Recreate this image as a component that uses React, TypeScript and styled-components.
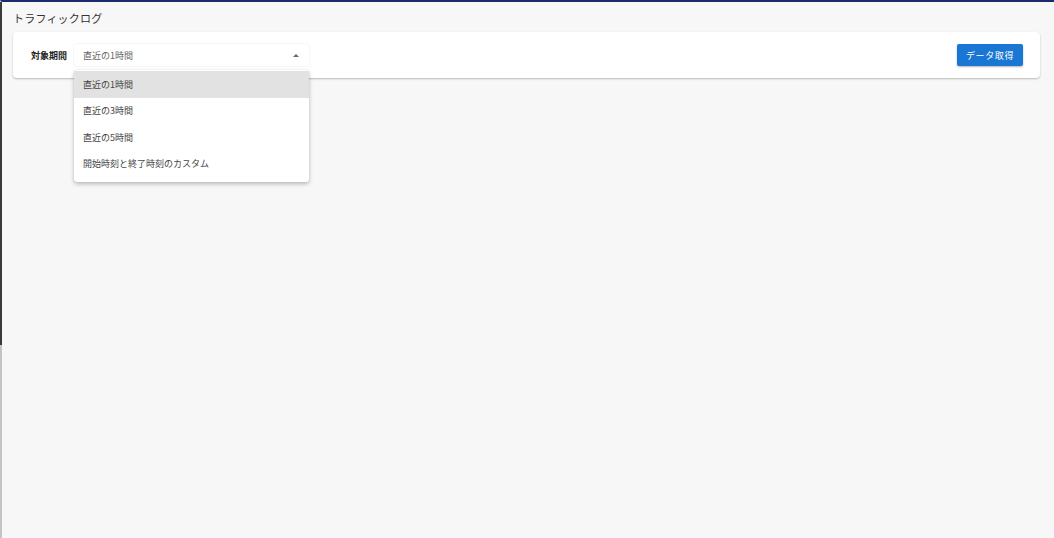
import React, { useState } from 'react'
import styled, { createGlobalStyle } from 'styled-components'

const GlobalStyle = createGlobalStyle`
    html, body {
        margin: 0;
        padding: 0;
        height: 100%;
    }
    body {
        background: #f7f7f7;
        font-family: "Noto Sans CJK JP", "Noto Sans", Roboto, sans-serif;
        color: #333;
    }
    #root {
        height: 100%;
    }
`

const Page = styled.div`
    box-sizing: border-box;
    height: 538px;
    width: 1054px;
    border-top: 2px solid #1b2a6b;
    border-left: 2px solid #c4c4c4;
    position: relative;
    padding: 7px 14px 0 11px;

    &::before {
        content: "";
        position: absolute;
        left: -2px;
        top: 0;
        width: 2px;
        height: 343px;
        background: #3a3a3a;
    }
`

const Title = styled.h1`
    margin: 0 0 5px 0;
    font-size: 11px;
    font-weight: 400;
    line-height: 18px;
    color: #333;
    letter-spacing: 0.2px;
`

const Card = styled.div`
    background: #fff;
    border-radius: 4px;
    box-shadow: 0 1px 2px rgba(0, 0, 0, 0.25);
    height: 46px;
    display: flex;
    align-items: center;
    padding: 0 17px 0 18px;
`

const Label = styled.span`
    font-size: 9px;
    font-weight: 700;
    color: #222;
    margin-right: 7px;
`

const SelectWrap = styled.div`
    position: relative;
    width: 235px;
`

const SelectBox = styled.div`
    box-sizing: border-box;
    height: 22px;
    display: flex;
    align-items: center;
    justify-content: space-between;
    padding: 0 9px;
    background: #fff;
    border-radius: 3px;
    box-shadow: 0 0 2px rgba(0, 0, 0, 0.12);
    font-size: 9px;
    color: #666;
    cursor: pointer;
`

const Caret = styled.span`
    width: 0;
    height: 0;
    border-left: 3.5px solid transparent;
    border-right: 3.5px solid transparent;
    border-bottom: 3.5px solid #666;
    margin-right: 1px;
`

const Menu = styled.ul`
    position: absolute;
    top: 26px;
    left: 0;
    right: 0;
    margin: 0;
    padding: 1px 0 5px 0;
    list-style: none;
    background: #fff;
    border-radius: 3px;
    box-shadow: 0 2px 4px rgba(0, 0, 0, 0.25), 0 0 1px rgba(0, 0, 0, 0.15);
    z-index: 10;
`

const MenuItem = styled.li<{ active: boolean }>`
    height: 26.5px;
    display: flex;
    align-items: center;
    padding: 0 9px;
    font-size: 9px;
    color: #444;
    background: ${props => props.active ? '#e2e2e2' : '#fff'};
    cursor: pointer;
`

const Spacer = styled.div`
    flex: 1;
`

const FetchButton = styled.button`
    height: 22px;
    width: 66px;
    padding: 0;
    background: #1976d2;
    color: #fff;
    border: none;
    border-radius: 2px;
    font-family: inherit;
    font-size: 9px;
    letter-spacing: 0.6px;
    box-shadow: 0 1px 2px rgba(0, 0, 0, 0.3);
    cursor: pointer;
`

const options = ["直近の1時間", "直近の3時間", "直近の5時間", "開始時刻と終了時刻のカスタム"]

const App: React.FC = () => {
    const [selected, setSelected] = useState(0)

    return (
        <>
            <GlobalStyle />
            <Page>
                <Title>トラフィックログ</Title>
                <Card>
                    <Label>対象期間</Label>
                    <SelectWrap>
                        <SelectBox>
                            {options[selected]}
                            <Caret />
                        </SelectBox>
                        <Menu>
                            {options.map((opt, ind) => (
                                <MenuItem key={ind} active={ind === selected} onClick={() => setSelected(ind)}>
                                    {opt}
                                </MenuItem>
                            ))}
                        </Menu>
                    </SelectWrap>
                    <Spacer />
                    <FetchButton>データ取得</FetchButton>
                </Card>
            </Page>
        </>
    )
}

export default App
